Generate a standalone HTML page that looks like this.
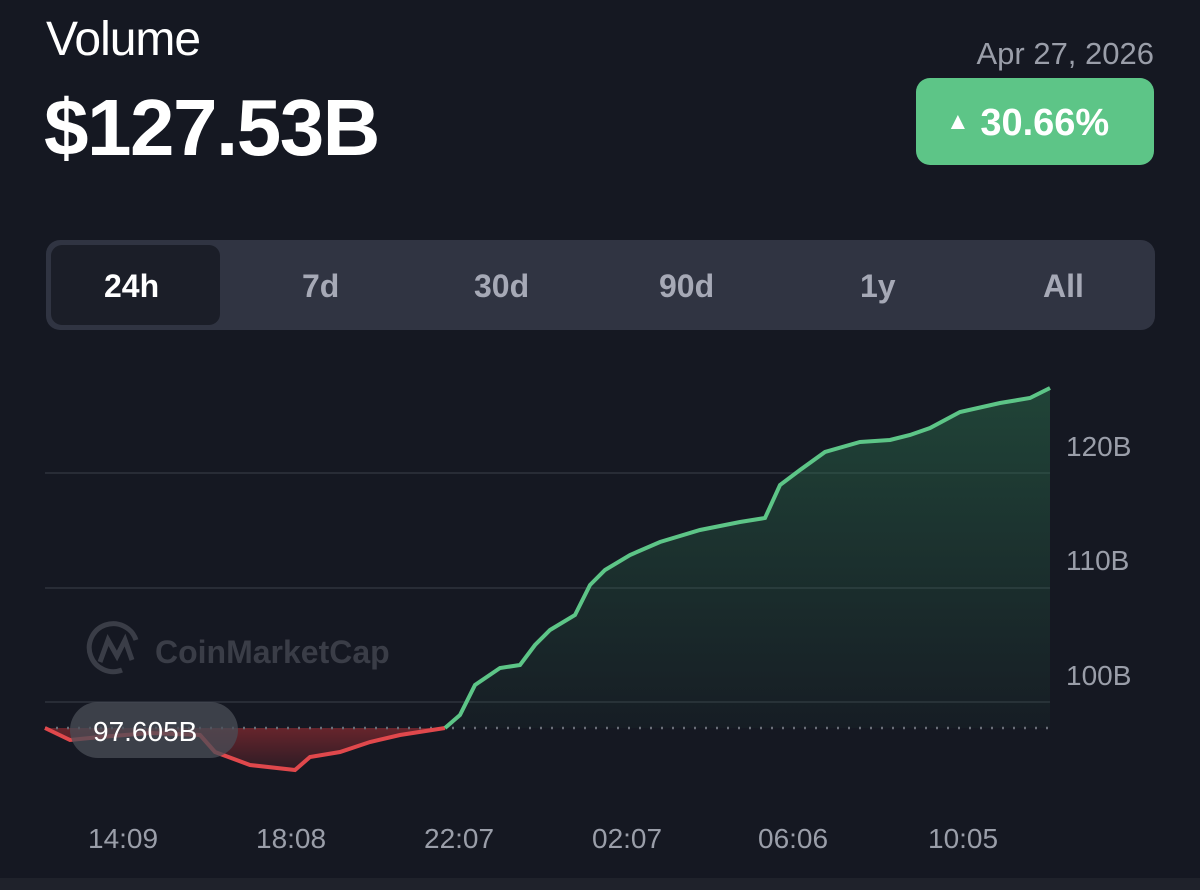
<!DOCTYPE html>
<html><head><meta charset="utf-8"><style>
body{margin:0;width:1200px;height:890px;background:#151822;font-family:"Liberation Sans",sans-serif;overflow:hidden;position:relative}
.t{position:absolute;white-space:nowrap}
</style></head><body>
<div class="t" style="left:46px;top:12px;font-size:48px;color:#fff;letter-spacing:-1px;font-weight:500">Volume</div>
<div class="t" style="left:44px;top:82px;font-size:80px;font-weight:bold;color:#fff;letter-spacing:-1.5px">$127.53B</div>
<div class="t" style="right:46px;top:36px;font-size:31px;color:#9a9ea9">Apr 27, 2026</div>
<div style="position:absolute;left:916px;top:78px;width:238px;height:87px;border-radius:14px;background:#5dc587"></div>
<div class="t" style="left:946px;top:102px;font-size:38px;color:#fff;font-weight:bold"><span style="font-size:24px;position:relative;top:-6px">▲</span> 30.66%</div>
<div style="position:absolute;left:46px;top:240px;width:1109px;height:90px;border-radius:14px;background:#303442"></div>
<div style="position:absolute;left:51px;top:245px;width:169px;height:80px;border-radius:11px;background:#1b1e28"></div>
<div class="t" style="left:0;top:268px;width:1200px;font-size:32px;color:#a6a9b6;font-weight:bold">
<span class="t" style="left:104px;color:#fff">24h</span><span class="t" style="left:302px">7d</span><span class="t" style="left:474px">30d</span><span class="t" style="left:659px">90d</span><span class="t" style="left:860px">1y</span><span class="t" style="left:1043px">All</span></div>
<svg width="1200" height="890" style="position:absolute;left:0;top:0">
<defs>
<linearGradient id="g" x1="0" y1="0" x2="0" y2="1"><stop offset="0" stop-color="#2e7a52" stop-opacity=".45"/><stop offset="1" stop-color="#2e7a52" stop-opacity=".05"/></linearGradient>
<linearGradient id="r" x1="0" y1="0" x2="0" y2="1"><stop offset="0" stop-color="#8a2a30" stop-opacity=".7"/><stop offset="1" stop-color="#8a2a30" stop-opacity=".2"/></linearGradient>
</defs>
<g stroke="#2e323d" stroke-width="1.5"><line x1="45" y1="473" x2="1050" y2="473"/><line x1="45" y1="588" x2="1050" y2="588"/><line x1="45" y1="702" x2="1050" y2="702"/></g>
<path d="M445,728 L460,715 475,685 500,668 520,665 535,645 550,630 575,615 590,585 605,570 630,555 660,542 700,530 740,522 765,518 780,485 800,470 825,452 860,442 890,440 910,435 930,428 960,412 1000,403 1030,398 1050,388 L1050,728 Z" fill="url(#g)"/>
<path d="M45,728 L70,740 100,737 150,733 200,735 215,752 250,765 295,770 310,757 340,752 370,742 400,735 445,728 Z" fill="url(#r)"/>
<line x1="45" y1="728" x2="1050" y2="728" stroke="#6a6e78" stroke-width="2.5" stroke-dasharray="2 9"/>
<path d="M45,728 L70,740 100,737 150,733 200,735 215,752 250,765 295,770 310,757 340,752 370,742 400,735 445,728" fill="none" stroke="#e0484c" stroke-width="4"/>
<path d="M445,728 L460,715 475,685 500,668 520,665 535,645 550,630 575,615 590,585 605,570 630,555 660,542 700,530 740,522 765,518 780,485 800,470 825,452 860,442 890,440 910,435 930,428 960,412 1000,403 1030,398 1050,388" fill="none" stroke="#5dc587" stroke-width="4"/>
<g fill="none" stroke="#3a3d47" stroke-width="5"><path d="M122,670 A24,24 0 1,1 136,640"/><path d="M100,662 L108,640 L117,656 L125,640 L132,660"/></g>
<text x="155" y="663" font-family="Liberation Sans" font-size="32" font-weight="bold" fill="#3a3d47">CoinMarketCap</text>
<rect x="70" y="702" width="168" height="56" rx="28" fill="#4a4d57" fill-opacity=".75"/>
<text x="93" y="741" font-family="Liberation Sans" font-size="28" fill="#fff">97.605B</text>
<g font-family="Liberation Sans" font-size="28" fill="#9a9ea9"><text x="1066" y="456">120B</text><text x="1066" y="570">110B</text><text x="1066" y="685">100B</text>
<text x="88" y="848">14:09</text><text x="256" y="848">18:08</text><text x="424" y="848">22:07</text><text x="592" y="848">02:07</text><text x="758" y="848">06:06</text><text x="928" y="848">10:05</text></g>
<rect x="0" y="878" width="1200" height="12" fill="#1f222b"/>
</svg>
</body></html>
